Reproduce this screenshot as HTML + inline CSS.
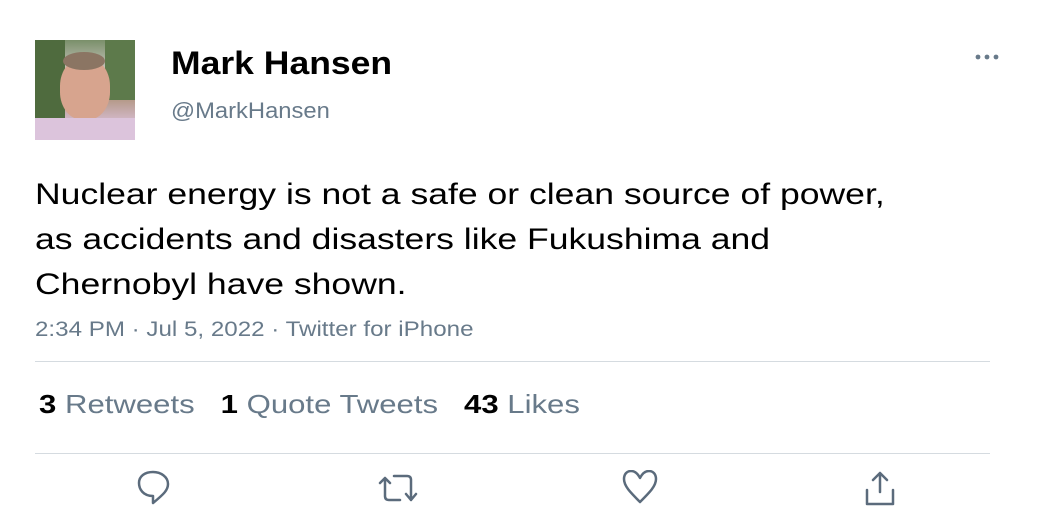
<!DOCTYPE html>
<html><head><style>
*{margin:0;padding:0;box-sizing:border-box}
body{width:1050px;height:525px;background:#fff;font-family:"Liberation Sans",sans-serif;position:relative;overflow:hidden}
.a{position:absolute;transform-origin:0 0;white-space:nowrap}
</style></head><body>
<div class="a" style="left:35px;top:40px;width:100px;height:100px;overflow:hidden;background:linear-gradient(180deg,#7a8f6a 0%,#c9c6bf 30%,#b59a8a 60%,#d9bfd6 85%,#8c8a88 100%)">
<div class="a" style="left:0;top:0;width:30px;height:80px;background:#4f6b3e"></div>
<div class="a" style="left:70px;top:0;width:30px;height:60px;background:#5d7a4b"></div>
<div class="a" style="left:25px;top:18px;width:50px;height:62px;border-radius:45%;background:#d7a48e"></div>
<div class="a" style="left:28px;top:12px;width:42px;height:18px;border-radius:50%;background:#8b7563"></div>
<div class="a" style="left:0;top:78px;width:100px;height:22px;background:#dcc4dc"></div>
</div>
<div class="a" style="left:171px;top:45px;font-size:32px;font-weight:bold;color:#000;transform:scaleX(1.11)">Mark Hansen</div>
<div class="a" style="left:171px;top:98px;font-size:22px;color:#687a8a;transform:scaleX(1.08)">@MarkHansen</div>
<svg class="a" style="left:974px;top:52px" width="30" height="10" fill="#687a8a"><circle cx="4" cy="5" r="2.4"/><circle cx="13" cy="5" r="2.4"/><circle cx="22" cy="5" r="2.4"/></svg>
<div class="a" style="left:35px;top:172px;font-size:30px;line-height:45px;color:#000;transform:scaleX(1.185)">Nuclear energy is not a safe or clean source of power,<br>as accidents and disasters like Fukushima and<br>Chernobyl have shown.</div>
<div class="a" style="left:35px;top:318px;font-size:21px;color:#687a8a;transform:scaleX(1.15)">2:34 PM · Jul 5, 2022 · Twitter for iPhone</div>
<div class="a" style="left:35px;top:361px;width:955px;height:1px;background:#d5dbe0"></div>
<div class="a" style="left:39px;top:389px;font-size:26px;color:#687a8a;white-space:pre;transform:scaleX(1.197)"><b style="color:#000">3</b> Retweets   <b style="color:#000">1</b> Quote Tweets   <b style="color:#000">43</b> Likes</div>
<div class="a" style="left:35px;top:453px;width:955px;height:1px;background:#d5dbe0"></div>
<svg class="a" style="left:0;top:470px" width="1050" height="50" fill="none" stroke="#5b6b7c" stroke-width="2.5" stroke-linecap="round" stroke-linejoin="round">
<path d="M153 33 L153 26 C143 26 139 19 139 13 C139 6 145 2 153 2 C161 2 168 7 168 14 C168 20 164 24 153 33Z"/>
<path d="M385 8 L385 26 Q385 30 389 30 L400 30 M380 13 L385 8 L390 13 M394 6 L407 6 Q411 6 411 10 L411 30 M406 24 L411 30 L416 24"/>
<path d="M640 32 C630 22 624 16 624 9 C624 4 627 1 631 1 C635 1 638 4 640 8 C642 4 645 1 649 1 C653 1 656 4 656 9 C656 16 650 22 640 32Z"/>
<path d="M880 3 L880 22 M873 10 L880 3 L887 10 M867 20 L867 34 L893 34 L893 20"/>
</svg>
</body></html>
